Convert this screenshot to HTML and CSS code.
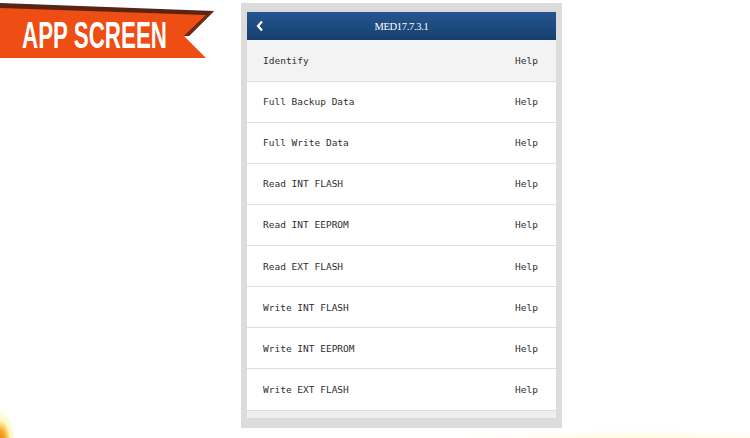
FILE: index.html
```html
<!DOCTYPE html>
<html>
<head>
<meta charset="utf-8">
<link rel="stylesheet" href="styles.css">
</head>
<body>
<div class="page">
  <svg class="ribbon" width="220" height="62" viewBox="0 0 220 62" overflow="visible">
    <polygon points="0,3 214,11 189,36 0,36" fill="#5a2412"/>
    <polygon points="0,8 206,15 184,36 206,58 0,58" fill="#ee4d14"/>
    <polygon points="206,15 214,11 189,36 184,36" fill="#6e2a12"/>
    <text x="22" y="48" textLength="145" lengthAdjust="spacingAndGlyphs" class="ribbon-text">APP SCREEN</text>
  </svg>
  <div class="frame">
    <div class="screen">
      <div class="header">
        <svg class="back" width="8" height="12" viewBox="0 0 8 12"><polyline points="6,1.5 2,6 6,10.5" fill="none" stroke="#fff" stroke-width="2.2"/></svg>
        <span class="title">MED17.7.3.1</span>
      </div>
      <ul class="list">
        <li class="row first"><span>Identify</span><span>Help</span></li>
        <li class="row"><span>Full Backup Data</span><span>Help</span></li>
        <li class="row"><span>Full Write Data</span><span>Help</span></li>
        <li class="row"><span>Read INT FLASH</span><span>Help</span></li>
        <li class="row"><span>Read INT EEPROM</span><span>Help</span></li>
        <li class="row"><span>Read EXT FLASH</span><span>Help</span></li>
        <li class="row"><span>Write INT FLASH</span><span>Help</span></li>
        <li class="row"><span>Write INT EEPROM</span><span>Help</span></li>
        <li class="row"><span>Write EXT FLASH</span><span>Help</span></li>
      </ul>
      <div class="tail"></div>
    </div>
  </div>
</div>
</body>
</html>
```
FILE: styles.css
```css
html, body {
  margin: 0;
  padding: 0;
}
body {
  width: 750px;
  height: 438px;
  overflow: hidden;
  background:
    radial-gradient(ellipse 16px 30px at 0px 440px, #f07a10 0%, #f6b030 35%, rgba(255,240,150,0.6) 65%, rgba(255,255,255,0) 100%),
    radial-gradient(ellipse 200px 12px at 640px 442px, rgba(255,250,200,0.9) 0%, rgba(255,255,255,0) 100%),
    #ffffff;
}
.page {
  position: relative;
  height: 438px;
  padding-top: 3px;
  padding-left: 241px;
  box-sizing: border-box;
}
.ribbon {
  position: absolute;
  left: 0;
  top: 0;
}
.ribbon-text {
  font-family: "Liberation Sans", Arial, sans-serif;
  font-weight: bold;
  font-size: 36px;
  fill: #ffffff;
}
.frame {
  width: 321px;
  height: 425px;
  box-sizing: border-box;
  background: #dcdcdc;
  padding: 9px 6px 10px 6px;
}
.screen {
  background: #ffffff;
  height: 406px;
  display: flex;
  flex-direction: column;
}
.header {
  height: 28px;
  background: linear-gradient(#255690, #173f6e);
  display: flex;
  align-items: center;
  justify-content: center;
  position: relative;
}
.back {
  position: absolute;
  left: 9px;
  top: 8px;
}
.title {
  font-family: "Liberation Serif", "Times New Roman", serif;
  color: #ffffff;
  font-size: 10.5px;
  letter-spacing: -0.3px;
}
.list {
  list-style: none;
  margin: 0;
  padding: 0;
}
.row {
  height: 40.15px;
  border-bottom: 1px solid #dedede;
  display: flex;
  align-items: center;
  justify-content: space-between;
  padding: 0 18px 0 16px;
  font-family: "DejaVu Sans Mono", "Liberation Mono", monospace;
  font-size: 9.5px;
  color: #2e2e2e;
}
.row.first {
  background: #f3f3f3;
  height: 40.5px;
}
.tail {
  flex: 1;
  background: #efefef;
}
```
